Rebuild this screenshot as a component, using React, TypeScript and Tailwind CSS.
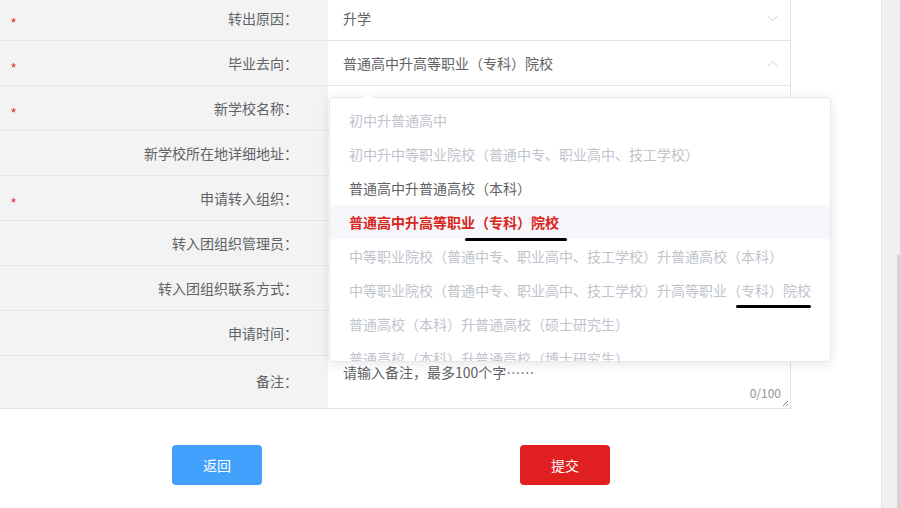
import React from 'react';
import { ChevronDown, ChevronUp } from 'lucide-react';

interface Row {
  label: string;
  required?: boolean;
  value?: string;
  arrow?: 'down' | 'up';
}

const rows: Row[] = [
  { label: '转出原因：', required: true, value: '升学', arrow: 'down' },
  { label: '毕业去向：', required: true, value: '普通高中升高等职业（专科）院校', arrow: 'up' },
  { label: '新学校名称：', required: true },
  { label: '新学校所在地详细地址：' },
  { label: '申请转入组织：', required: true },
  { label: '转入团组织管理员：' },
  { label: '转入团组织联系方式：' },
  { label: '申请时间：' },
];

const options = [
  { text: '初中升普通高中', disabled: true },
  { text: '初中升中等职业院校（普通中专、职业高中、技工学校）', disabled: true },
  { text: '普通高中升普通高校（本科）' },
  { text: '普通高中升高等职业（专科）院校', selected: true },
  { text: '中等职业院校（普通中专、职业高中、技工学校）升普通高校（本科）', disabled: true },
  { text: '中等职业院校（普通中专、职业高中、技工学校）升高等职业（专科）院校', disabled: true },
  { text: '普通高校（本科）升普通高校（硕士研究生）', disabled: true },
  { text: '普通高校（本科）升普通高校（博士研究生）', disabled: true },
];

const font = { fontFamily: '"Microsoft YaHei", "Noto Sans CJK SC", "Liberation Sans", sans-serif' };

const FormRow: React.FC<{ row: Row }> = ({ row }) => (
  <div className="flex h-[45px] border-b border-[#e4e4e4]">
    <div className="relative flex w-[328px] items-center justify-end bg-[#f3f3f3] pr-[30px] text-[14px] text-[#606266]">
      {row.required && (
        <span className="absolute left-[11px] top-[20px] font-['Liberation_Sans'] text-[13px] leading-none text-[#e02020]">*</span>
      )}
      {row.label}
    </div>
    <div className="flex flex-1 items-center justify-between bg-white pl-[15px] pr-[9px] text-[14px] text-[#606266]">
      <span>{row.value}</span>
      {row.arrow === 'down' && <ChevronDown className="h-[17px] w-[17px] text-[#c0c4cc]" strokeWidth={1.2} />}
      {row.arrow === 'up' && <ChevronUp className="h-[17px] w-[17px] text-[#c0c4cc]" strokeWidth={1.2} />}
    </div>
  </div>
);

const App: React.FC = () => {
  return (
    <div className="relative flex h-[508px] w-[900px] overflow-hidden bg-white" style={font}>
      <div className="relative w-[881px]">
        <div className="-mt-1 w-[791px] border-r border-[#e4e4e4]">
          {rows.map((row, i) => (
            <FormRow key={i} row={row} />
          ))}
          <div className="flex h-[53px] border-b border-[#e4e4e4]">
            <div className="flex w-[328px] items-center justify-end bg-[#f3f3f3] pb-[2px] pr-[30px] text-[14px] text-[#606266]">
              备注：
            </div>
            <div className="relative flex-1 bg-white pl-[15px] pt-[6px] text-[14px] text-[#606266]">
              请输入备注，最多100个字……
              <span className="absolute bottom-[6px] right-[9px] text-[12px] text-[#909399]">0/100</span>
              <svg className="absolute bottom-[1px] right-[1px]" width="8" height="8" viewBox="0 0 8 8">
                <path d="M7 2 L2 7 M7 5 L5 7" stroke="#888" strokeWidth="1" />
              </svg>
            </div>
          </div>
        </div>

        <div className="mt-[36px] flex gap-[258px] pl-[172px]">
          <button className="h-[40px] w-[90px] rounded-[4px] bg-[#42a0fd] text-[14px] text-white">返回</button>
          <button className="h-[40px] w-[90px] rounded-[4px] bg-[#e02020] text-[14px] text-white">提交</button>
        </div>

        {/* dropdown */}
        <div className="absolute left-[329px] top-[97px] h-[265px] w-[502px] rounded-[4px] border border-[#e4e7ed] bg-white shadow-[0_2px_12px_rgba(0,0,0,0.1)]">
          <div className="absolute -top-[6px] left-[32px] h-0 w-0 border-x-[6px] border-b-[6px] border-x-transparent border-b-white" />
          <div className="h-full overflow-hidden pt-[5px]">
            {options.map((o, i) => (
              <div
                key={i}
                className={
                  o.selected
                    ? 'flex h-[34px] items-center whitespace-nowrap bg-[#f5f7fa] px-[19px] text-[14px] font-bold text-[#d9251c]'
                    : o.disabled
                    ? 'flex h-[34px] items-center whitespace-nowrap px-[19px] text-[14px] text-[#c0c4cc]'
                    : 'flex h-[34px] items-center whitespace-nowrap px-[19px] text-[14px] text-[#606266]'
                }
              >
                {o.text}
              </div>
            ))}
          </div>
        </div>

        {/* hand-drawn annotation marks */}
        <div className="absolute left-[465px] top-[238px] h-[3px] w-[102px] rounded-full bg-black" />
        <div className="absolute left-[736px] top-[305px] h-[3px] w-[75px] rounded-full bg-black" />
      </div>

      {/* scrollbar */}
      <div className="relative w-[19px] border-l border-[#e6e6e6] bg-[#f0f0f0]">
        <div className="absolute right-0 top-[255px] h-[253px] w-[3px] bg-[#d4d4d4]" />
      </div>
    </div>
  );
};

export default App;
